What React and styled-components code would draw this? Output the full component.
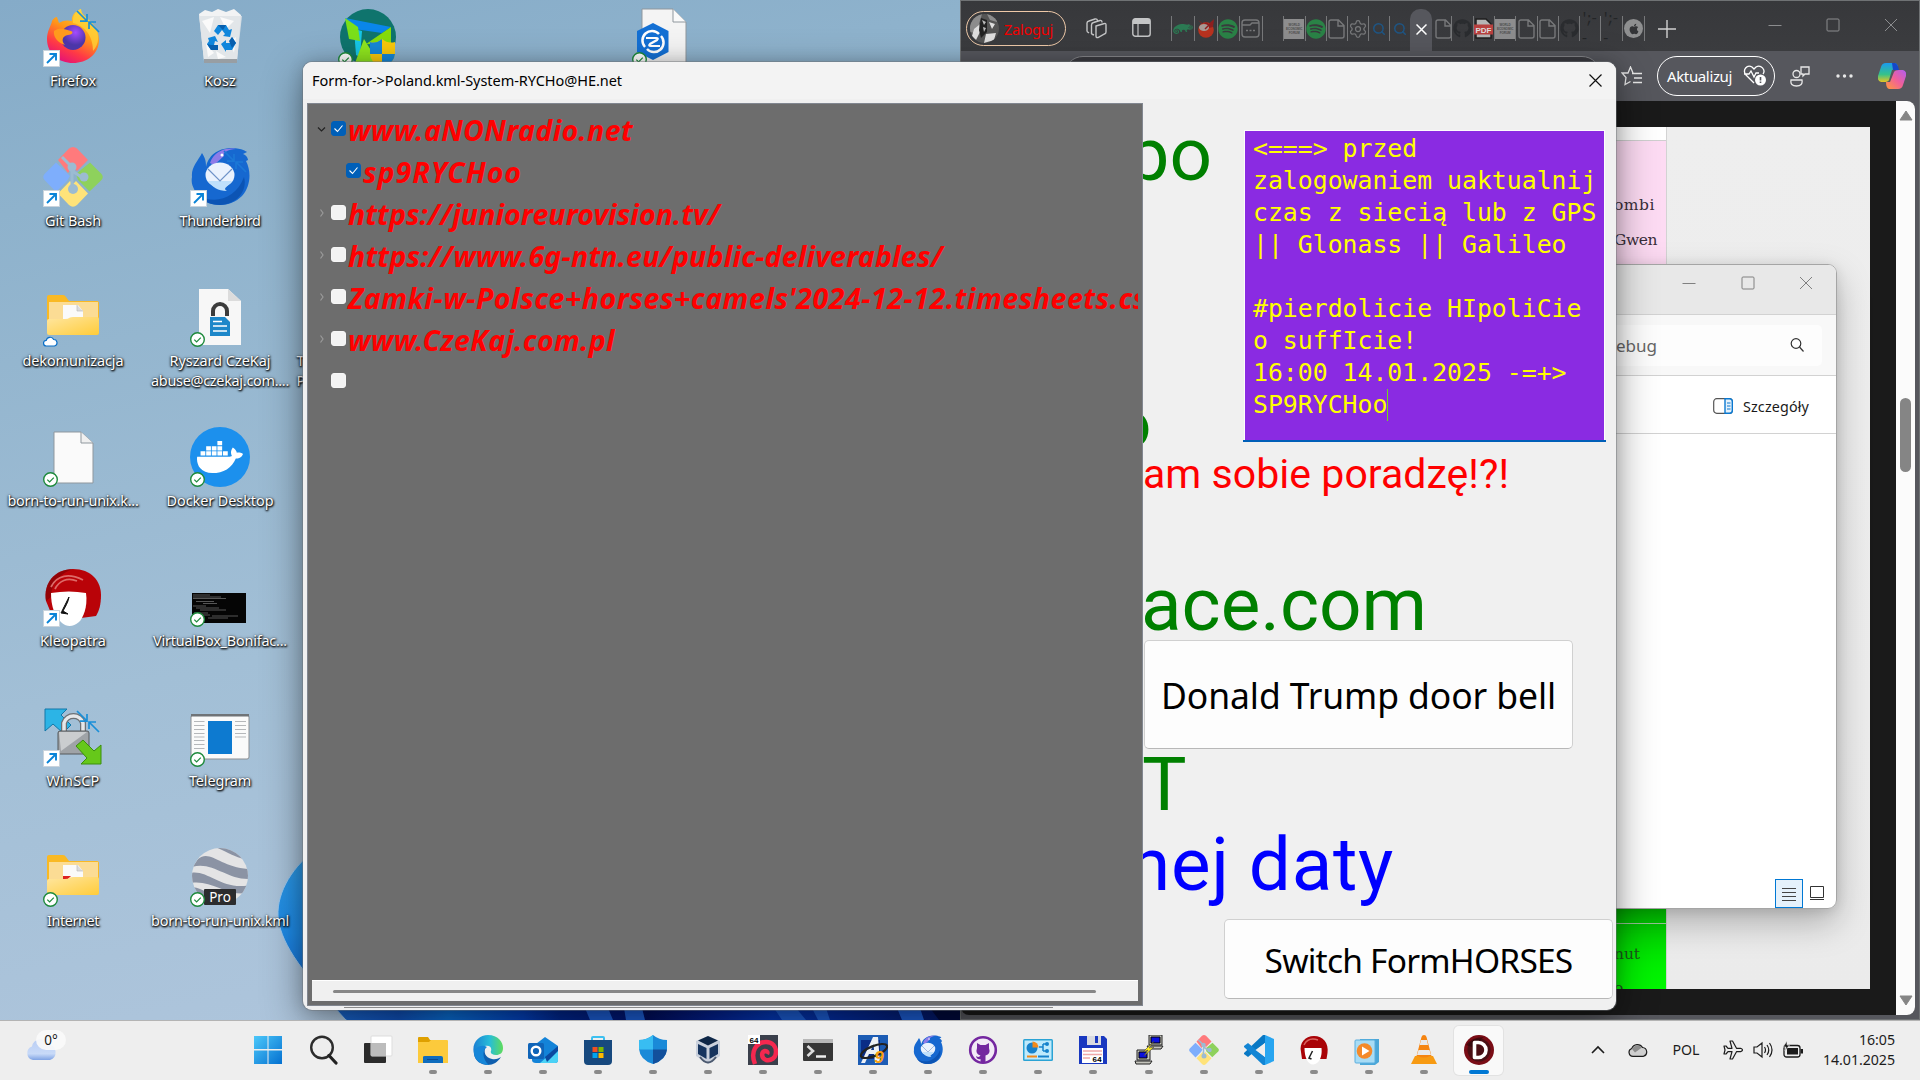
import React, { useLayoutEffect, useRef, useState } from "react";
import styled, { createGlobalStyle, css } from "styled-components";
import { FaSpotify, FaGithub, FaApple, FaSuse, FaDocker } from "react-icons/fa";
import { Settings, Search } from "lucide-react";

const UI = `"Noto Sans", "Open Sans", sans-serif`;

const Global = createGlobalStyle`
  html, body { margin: 0; padding: 0; overflow: hidden; background: #9dbbd3; }
  * { box-sizing: border-box; }
  svg { display: block; flex: none; }
`;

/* ---------- text fitted to a given advance width ---------- */
const Fitted = styled.span`
  display: inline-block;
  white-space: pre;
`;
function Fit({ w, children }) {
  const ref = useRef(null);
  const [sp, setSp] = useState(0);
  useLayoutEffect(() => {
    const natural = ref.current.getBoundingClientRect().width;
    setSp((w - natural) / children.length);
  }, [w, children]);
  return (
    <Fitted ref={ref} style={{ letterSpacing: sp }}>
      {children}
    </Fitted>
  );
}

/* ---------- desktop ---------- */
const Screen = styled.div`
  position: relative;
  width: 1920px;
  height: 1080px;
  overflow: hidden;
  font-family: ${UI};
  display: flex;
  flex-direction: column;
`;
const Desktop = styled.main`
  position: relative;
  height: 1020px;
  overflow: hidden;
  background: linear-gradient(168deg, #85abc8 0%, #8eb2cc 15%, #a2bfd6 50%, #aec5dc 78%, #b0c8de 100%);
`;
const Wallpaper = styled.svg`
  position: absolute;
  inset: 0;
`;
const IconGrid = styled.div`
  position: absolute;
  left: -0.5px;
  top: 7px;
  display: flex;
`;
const IconColumn = styled.div`
  display: flex;
  flex-direction: column;
  width: 147px;
`;
const IconCell = styled.div`
  height: 140px;
  display: flex;
  flex-direction: column;
  align-items: ${(p) => (p.$left ? "flex-start" : "center")};
  padding-left: ${(p) => (p.$left ? "3px" : 0)};
`;
const IconArt = styled.div`
  position: relative;
  width: 60px;
  height: 60px;
  ${(p) => p.$left && "margin-left: 41px;"}
`;
const Badge = styled.div`
  position: absolute;
  left: 0;
  bottom: 0;
`;
const IconLabel = styled.div`
  margin-top: 4px;
  font-size: 14.4px;
  line-height: 20px;
  color: #fff;
  text-align: center;
  white-space: nowrap;
  text-shadow: 0 1px 2px #000, 1px 1px 2px rgba(0, 0, 0, 0.9), 0 0 3px rgba(0, 0, 0, 0.5);
  display: flex;
  flex-direction: column;
  align-items: center;
`;

const Shortcut = () => (
  <svg width="17" height="17" viewBox="0 0 17 17">
    <rect x=".5" y=".5" width="16" height="16" fill="#fff" stroke="#c9d3dc" />
    <path d="M4 13L13 4M6.5 4H13V10.5" fill="none" stroke="#0a84d8" strokeWidth="1.9" />
  </svg>
);
const Synced = () => (
  <svg width="15" height="15" viewBox="0 0 15 15">
    <circle cx="7.5" cy="7.5" r="6.8" fill="#fff" stroke="#1e8a3c" strokeWidth="1.4" />
    <path d="M4.3 7.7L6.6 10L10.8 5.6" fill="none" stroke="#1e8a3c" strokeWidth="1.2" />
  </svg>
);
const CloudBadge = () => (
  <svg width="15" height="15" viewBox="0 0 15 15">
    <path d="M3.5 14a2.8 2.8 0 0 1-.3-5.6A4 4 0 0 1 10.7 7.500A3.300 3.300 0 0 1 11.500 14Z" fill="#fff" stroke="#0a6fc8" strokeWidth="1.2" />
  </svg>
);
const Squeeze = ({ c = "#1a8fd8" }) => (
  <g fill="none" stroke={c} strokeWidth="1.7">
    <path d="M34 4L44 14M44 7V14.200H37M56 25L46 15M46 22V15H53" />
  </g>
);

const Svg60 = ({ children }) => (
  <svg width="60" height="60" viewBox="0 0 60 60">
    {children}
  </svg>
);

const FirefoxArt = () => (
  <Svg60>
    <defs>
      <linearGradient id="ffa" x1="0.8" y1="0" x2="0.3" y2="1">
        <stop offset="0" stopColor="#ffe03a" />
        <stop offset=".45" stopColor="#ff9518" />
        <stop offset=".75" stopColor="#ff3a45" />
        <stop offset="1" stopColor="#e3107a" />
      </linearGradient>
      <radialGradient id="ffb" cx=".6" cy=".3">
        <stop offset="0" stopColor="#a44bff" />
        <stop offset="1" stopColor="#4b36a8" />
      </radialGradient>
    </defs>
    <path d="M4 32C4 24 8 19 9 14C11 10 14 10 14 10L16 16C20 13 25 13 29 14C28 8 33 4 38 2C38 8 44 10 49 16C54 21 56 27 56 33C56 47 44 56 30 56S4 47 4 32Z" fill="url(#ffa)" />
    <path d="M38 2C38 8 44 10 49 16C58 26 56 38 50 44C50 32 45 20 30 16C29 9 33 4 38 2Z" fill="#ffd43a" opacity=".75" />
    <circle cx="30" cy="30.500" r="12.500" fill="url(#ffb)" />
    <path d="M11 24C16 20 22 22 28 24C31 25 29 28 25 28C19 29 18 34 22 38C15 36 10 30 11 24Z" fill="#ff9a1c" />
    <Squeeze />
  </Svg60>
);
const BinArt = () => (
  <Svg60>
    <path d="M9 7L15 3L22 5L28 2L36 5L44 2L51 8L47 54H14Z" fill="#f2f3f4" />
    <path d="M9 9H52L47 53H14Z" fill="#dfe3e6" opacity=".85" />
    <path d="M12 14L24 10L20 26ZM30 10L44 14L36 22ZM16 36L24 46L18 50ZM40 34L46 30L44 46ZM26 44L36 50L28 52Z" fill="#fafafa" />
    <path d="M14 52H47V56H14Z" fill="#989ea3" />
    <g fill="#0f86dc">
      <path d="M24 24L28 18H36L39 23L42 22L40 30L33 29L35 27L32 23L28 28Z" />
      <path d="M18 31L25 29L28 35L25 34L24 38L28 38V43H21L17 37L19 34Z" />
      <path d="M31 37L36 33V36L40 36L42 30L46 36L42 43H36V45Z" />
    </g>
    <path d="M28 18H36L33 23ZM17 37L21 43L28 43V38L21 38ZM42 30L46 36L42 41L39 34Z" fill="#075fae" />
  </Svg60>
);
const GitShape = () => (
  <g>
    <path d="M26 1.500Q30 -1.500 34 1.500L45 13L34 24L29 20L25 26L15 13Z" fill="#ff7a7c" />
    <path d="M13 15.500L27 29L24 34L13 45L1.500 33Q-1 30 1.500 27Z" fill="#7eaefc" />
    <path d="M47 15.500L58.500 27Q61 30 58.500 33L46.500 44.500L35 33L33 27Z" fill="#8ed15c" />
    <path d="M15 46.500L27 34L30 37L33 34L45 46.500L34 58Q30 61.500 26 58Z" fill="#ffe37a" />
    <path d="M19 10L29 20V40M29 24L40 31" stroke="#9cbbd2" strokeWidth="3" fill="none" />
    <circle cx="29" cy="20" r="4.500" fill="#9cbbd2" />
    <circle cx="41" cy="30" r="4.500" fill="#9cbbd2" />
    <circle cx="30" cy="42" r="5" fill="#9cbbd2" />
  </g>
);
const TbirdShape = () => (
  <g>
    <path d="M2 30C1 20 8 14 12 6C16 12 16 16 16 20C18 10 26 1 42 1C52 1 57 5 57 5L53 7C58 9 58 13 58 13L56 14C62 26 60 40 52 49C40 61 20 61 9 49C2 41 1 35 2 30Z" fill="#1668d0" />
    <path d="M20 16C24 4 36 0 46 2C38 2 32 6 34 9L24 18Z" fill="#8d7be8" />
    <path d="M8 48C24 58 46 52 54 30C58 44 46 58 30 58C20 58 12 54 8 48Z" fill="#0c54b4" />
    <ellipse cx="30" cy="28" rx="14.500" ry="12.500" fill="#eaf2fd" />
    <path d="M18 34C22 40 28 44 37 44C32 41 38 40 42 34Z" fill="#bfe0fb" />
    <path d="M18 22L30 34L42 22" fill="none" stroke="#6f93c8" strokeWidth="1.200" />
    <circle cx="32" cy="8" r="1.500" fill="#fff" />
  </g>
);
const FolderArt = ({ red }) => (
  <Svg60>
    <defs>
      <linearGradient id="fold" x1="0" y1="0" x2="1" y2="1">
        <stop offset="0" stopColor="#ffe6a0" />
        <stop offset="1" stopColor="#ffcc3a" />
      </linearGradient>
    </defs>
    <path d="M4 10Q4 8 6 8H20Q22 8 23 10L26 14H54Q56 14 56 16V44H4Z" fill="#f9b924" />
    <rect x="6" y="15" width="49" height="24" fill="#fbdc94" />
    <path d="M20 18H35L40 24V34H20Z" fill="#fafafa" />
    <path d="M34 18V24H40" fill="#ddd" stroke="#bbb" strokeWidth=".7" />
    {red && <path d="M20 29H28L24 33H20Z" fill="#d22" />}
    <path d="M4 34Q4 32 6 32H22Q25 32 27 30.500Q28 30 30 30H54Q56 30 56 32V46Q56 48 54 48H6Q4 48 4 46Z" fill="url(#fold)" />
  </Svg60>
);
const LockFileArt = () => (
  <Svg60>
    <path d="M9 2H38L51 14V58H9Z" fill="#f7f7f7" />
    <path d="M38 2V14H51Z" fill="#dcdcdc" />
    <path d="M23 29V24A7 7 0 0 1 37 24V29" fill="none" stroke="#3c3c3c" strokeWidth="4" />
    <path d="M20 30H35L40 35V49H20Z" fill="#1d87c9" />
    <path d="M23 34.500H32M23 39H37M23 44H37" stroke="#fff" strokeWidth="1.700" />
  </Svg60>
);
const FileArt = () => (
  <Svg60>
    <path d="M11 5H38L50 16V56H11Z" fill="#fafafa" stroke="#8f979d" />
    <path d="M38 5V16H50" fill="#f0f0f0" stroke="#8f979d" />
  </Svg60>
);
const Dock = styled.div`
  width: 60px;
  height: 60px;
  border-radius: 50%;
  background: #1c90ed;
  display: flex;
  align-items: center;
  justify-content: center;
  color: #fff;
`;
const KleoShape = () => (
  <g>
    <path d="M3 34C0 16 12 2 30 2C48 2 58 14 58 28C58 38 56 44 53 49L38 51L8 46Z" fill="#b90308" />
    <path d="M3 34C0 16 12 2 30 2C18 6 8 16 8 30Z" fill="#7a0205" opacity=".6" />
    <path d="M8 26Q26 23 43 26C45 40 40 51 36 55C30 60 24 60 19 56C12 50 8 40 8 26Z" fill="#fff" />
    <path d="M8 20C14 8 26 6 40 13M12 22C16 14 24 10 34 14" stroke="#dd6a68" strokeWidth="1.800" fill="none" />
    <path d="M26 30C22 38 20 42 18 46L25 47L20 44C22 40 25 36 26 30Z" fill="#111" stroke="#111" />
  </g>
);
const TermArt = () => (
  <Svg60>
    <rect x="2" y="26" width="54" height="30" fill="#050505" />
    <g stroke="#6a6a6a" strokeWidth=".8">
      <path d="M3 28H20M3 30H31M3 31.500H36M6 34.500H24M13 36.500H27M3 39H16M6 41H29M10 43H36M4 46H18M8 48H20M22 49H48M18 51H38" />
    </g>
  </Svg60>
);
const WinscpArt = () => (
  <Svg60>
    <path d="M2 2H24L18 8L28 18L20 26L10 17L2 24Z" fill="#2cb4e6" stroke="#1377a8" />
    <path d="M21 28V16A10 10 0 0 1 40 16V28" fill="none" stroke="#6d7073" strokeWidth="6" />
    <path d="M21 28V16A10 10 0 0 1 40 16V28" fill="none" stroke="#e6e8ea" strokeWidth="3.500" />
    <rect x="15" y="24" width="31" height="23" rx="2" fill="#9fa3a7" stroke="#55585b" />
    <path d="M16 25H44L18 44Z" fill="#d5d7da" opacity=".8" />
    <path d="M33 39L40 33L51 44L58 38V57H38L44 51Z" fill="#66c81a" stroke="#3a8f0c" />
    <Squeeze />
  </Svg60>
);
const TelegramArt = () => (
  <Svg60>
    <rect x="1" y="8" width="58" height="44" rx="2" fill="#fafafa" stroke="#8c8f93" />
    <rect x="1" y="7" width="58" height="2.500" fill="#6f7377" />
    <rect x="18" y="14" width="24" height="33" fill="#0d7ad0" />
    <path d="M4 14.500H14.500M4 18.500H14.500M4 22.500H14.500M4 26.500H14.500M4 30H14.500M4 33.500H14.500M4 37.500H14.500M4 41.500H14.500M45 14.500H56M45 18.500H56M45 22.500H56M45 26.500H56M45 30H56" stroke="#b5b7ba" strokeWidth="1" />
  </Svg60>
);
const EarthArt = () => (
  <Svg60>
    <defs>
      <clipPath id="earth">
        <circle cx="30" cy="29" r="28" />
      </clipPath>
    </defs>
    <g clipPath="url(#earth)">
      <rect width="60" height="60" fill="#e4e4e5" />
      <path d="M8 12C20 2 30 20 58 22V32C36 32 22 14 2 20ZM0 26C18 22 32 44 60 38V46C36 50 22 32 0 36ZM20 -2C36 4 44 10 54 12L44 0ZM0 40C14 40 24 52 40 58L10 60Z" fill="#8b93a4" />
    </g>
    <rect x="14" y="42" width="32" height="16" rx="1" fill="#2b2c2e" />
    <text x="30" y="55" fontSize="13.500" fill="#fff" textAnchor="middle" fontFamily="Noto Sans, sans-serif">Pro</text>
  </Svg60>
);
const PrismArt = () => (
  <Svg60>
    <circle cx="30" cy="30" r="28" fill="#0f746d" />
    <path d="M7 11L53 20L44 26L16 22Z" fill="#0a86ea" />
    <path d="M16 22L24 24L22 50L18 48Z" fill="#16c6e8" />
    <path d="M7 11L20 20L22 34L11 32Z" fill="#7be01a" />
    <path d="M53 20V38L28 37Z" fill="#86dc0a" />
    <path d="M26 32L42 58L17 56Z" fill="#8fe61e" />
    <path d="M44 32Q50 37 57 35V47Q56 56 44 62Q33 56 32 47V35Q38 37 44 32Z" fill="#f9c80c" />
    <path d="M44 32Q38 37 32 35V47H44ZM44 47H57Q56 56 44 62Z" fill="#1787d8" />
  </Svg60>
);
const HexFileArt = () => (
  <Svg60>
    <path d="M10 2H41L54 15V60H10Z" fill="#f4f4f4" stroke="#8f979d" />
    <path d="M41 2V15H54" fill="#fafafa" stroke="#8f979d" />
    <path d="M21 16L36.500 24V45L21 53L5 45V24Z" fill="#1470d4" />
    <path d="M13 40A9.500 9.500 0 0 1 27 27M29 29A9.500 9.500 0 0 1 15 42" fill="none" stroke="#fff" strokeWidth="2.500" />
    <path d="M14 31H24Q27 31 25 33L18 37Q16 39 19 39H28" fill="none" stroke="#fff" strokeWidth="2.200" />
  </Svg60>
);

const COLUMNS = [
  [
    { art: <FirefoxArt />, badge: <Shortcut />, label: [["Firefox", 46]] },
    { art: <Svg60><GitShape /></Svg60>, badge: <Shortcut />, label: [["Git Bash", 56]] },
    { art: <FolderArt />, badge: <CloudBadge />, label: [["dekomunizacja", 101]] },
    { art: <FileArt />, badge: <Synced />, label: [["born-to-run-unix.k...", 131]] },
    { art: <Svg60><KleoShape /></Svg60>, badge: <Shortcut />, label: [["Kleopatra", 66]] },
    { art: <WinscpArt />, badge: <Shortcut />, label: [["WinSCP", 53]] },
    { art: <FolderArt red />, badge: <Synced />, label: [["Internet", 52]] },
  ],
  [
    { art: <BinArt />, label: [["Kosz", 32]] },
    { art: <Svg60><TbirdShape /><Squeeze c="#1b78d6" /></Svg60>, badge: <Shortcut />, label: [["Thunderbird", 81]] },
    { art: <LockFileArt />, badge: <Synced />, label: [["Ryszard CzeKaj", 101], ["abuse@czekaj.com....", 138]] },
    { art: <Dock><FaDocker size={46} /></Dock>, badge: <Synced />, label: [["Docker Desktop", 107]] },
    { art: <TermArt />, badge: <Synced />, label: [["VirtualBox_Bonifac...", 134]] },
    { art: <TelegramArt />, badge: <Synced />, label: [["Telegram", 62]] },
    { art: <EarthArt />, badge: <Synced />, label: [["born-to-run-unix.kml", 138]] },
  ],
  [
    { art: <PrismArt />, badge: <Synced />, left: true, label: [] },
    { left: true, label: [] },
    { left: true, label: [["T", 9], ["P", 9]] },
  ],
  [],
  [{ art: <HexFileArt />, badge: <Synced />, left: true, label: [] }],
];

function DesktopIcons() {
  return (
    <IconGrid>
      {COLUMNS.map((col, i) => (
        <IconColumn key={i}>
          {col.map((c, j) => (
            <IconCell key={j} $left={c.left}>
              <IconArt $left={c.left}>
                {c.art}
                {c.badge && <Badge>{c.badge}</Badge>}
              </IconArt>
              <IconLabel>
                {c.label.map(([t, w]) => (
                  <Fit key={t} w={w}>{t}</Fit>
                ))}
              </IconLabel>
            </IconCell>
          ))}
        </IconColumn>
      ))}
    </IconGrid>
  );
}

/* ---------- browser ---------- */
const Browser = styled.section`
  position: absolute;
  left: 960px;
  top: 0;
  width: 960px;
  height: 1020px;
  border: 1px solid #6f7274;
  background: #56575d;
  display: flex;
  flex-direction: column;
`;
const TabStrip = styled.div`
  height: 50px;
  background: linear-gradient(#37383b, #3b3c3f);
  display: flex;
  align-items: center;
  padding: 5px 0 0 5px;
`;
const Profile = styled.div`
  width: 100px;
  height: 35px;
  border: 1.500px solid #eec9a8;
  border-radius: 18px;
  display: flex;
  align-items: center;
  gap: 5px;
  padding-left: 3px;
  margin-right: 20px;
  color: #f40000;
  font-size: 14.500px;
`;
const TabTools = styled.div`
  display: flex;
  gap: 25px;
  color: #c4c5c6;
  width: 85px;
`;
const Tab = styled.div`
  width: ${(p) => p.$w || 21.3}px;
  height: 25px;
  border-right: 1px solid #77787a;
  border-left: ${(p) => (p.$first ? "1px solid #77787a" : "0")};
  margin-left: ${(p) => p.$gap || 0}px;
  display: flex;
  align-items: center;
  justify-content: center;
  color: ${(p) => p.$c || "#77787a"};
`;
const TabText = styled.span`
  font: 14px/20px "Liberation Mono", monospace;
  letter-spacing: -3.500px;
  padding-right: 3px;
`;
const ActiveTab = styled.div`
  width: 22px;
  height: 42px;
  margin: 0 3px 0 0;
  align-self: flex-end;
  border-radius: 10px 10px 0 0;
  background: #56575d;
  display: flex;
  align-items: center;
  justify-content: center;
  padding-bottom: 2px;
`;
const Wef = styled.div`
  width: 20px;
  height: 20px;
  flex: none;
  background: #8d8d8e;
  color: #4c4c4c;
  display: flex;
  flex-direction: column;
  align-items: center;
  justify-content: center;
  font: bold 3px/4px "Liberation Sans", sans-serif;
`;
const AppleDot = styled.div`
  width: 19px;
  height: 19px;
  border-radius: 50%;
  background: #8e8f90;
  color: #333437;
  display: flex;
  align-items: center;
  justify-content: center;
`;
const NewTab = styled.svg`
  margin-left: 13px;
`;
const PinnedSearch = styled.div`
  width: 20px;
  display: flex;
  justify-content: center;
  color: #1f5583;
`;
const Caption = styled.div`
  display: flex;
  margin-left: auto;
  gap: 44px;
  padding: 0 21px 8px 0;
`;
const Toolbar = styled.div`
  height: 50px;
  background: #56575d;
  display: flex;
  align-items: center;
`;
const Address = styled.div`
  align-self: flex-start;
  margin: 5px 0 0 103px;
  width: 537px;
  height: 38px;
  border: 1px solid #85868a;
  border-radius: 19px;
  background: #3b3b41;
  margin-right: 20px;
`;
const Update = styled.div`
  width: 118px;
  height: 40px;
  margin: 0 15px;
  border: 1.500px solid #fff;
  border-radius: 20px;
  display: flex;
  align-items: center;
  justify-content: space-between;
  padding: 0 8px 1px 9px;
  color: #fff;
  font-size: 15px;
`;
const ToolIcons = styled.div`
  display: flex;
  align-items: center;
  gap: 25.500px;
`;
const Viewport = styled.div`
  height: 914px;
  margin-right: 4px;
  display: flex;
  background: #1a1a1a;
  border-radius: 0 8px 8px 8px;
  overflow: hidden;
`;
const Page = styled.div`
  margin: 26px 26px 26px auto;
  width: 300px;
  height: 862px;
  background: linear-gradient(#eee, #ebebeb);
`;
const PageColumn = styled.div`
  width: 97px;
  height: 100%;
  background: #fff;
  border-right: 1px solid #d3d3d3;
  display: flex;
  flex-direction: column;
  overflow: hidden;
  color: #3a2f3a;
  font: 15.500px/35px "DejaVu Serif", serif;
`;
const PinkCell = styled.div`
  flex: none;
  margin-top: 13px;
  height: 640px;
  border-top: 1px solid #cfcfcf;
  background: #fddbf3;
  padding: 47px 0 0 44px;
  display: flex;
  flex-direction: column;
  align-items: flex-start;
`;
const GreenCell = styled.div`
  flex: none;
  height: 230px;
  background: linear-gradient(#00c800 55%, #00f000 82%, #00ff00);
  padding: 143px 0 0 44px;
  line-height: 34px;
  color: #1d5a1d;
  display: flex;
  flex-direction: column;
  align-items: flex-start;
`;
const GreenLine = styled.div`
  flex: none;
  height: 1px;
  width: 97px;
  margin: 0 0 13px -44px;
  background: #a8d8a8;
`;
const ScrollTrack = styled.div`
  width: 19px;
  background: #fbfbfb;
  display: flex;
  flex-direction: column;
  align-items: center;
  padding: 9px 0;
`;
const ScrollThumb = styled.div`
  width: 11px;
  height: 74px;
  border-radius: 6px;
  margin: 277px 0 auto;
  background: #858585;
`;

const DocIcon = () => (
  <svg width="17" height="20" viewBox="0 0 17 20" fill="none" stroke="currentColor" strokeWidth="1.400">
    <path d="M3 1H10.500L16 6.500V17Q16 19 14 19H3Q1 19 1 17V3Q1 1 3 1ZM10 1V7H16" />
  </svg>
);
const PdfIcon = () => (
  <svg width="19" height="21" viewBox="0 0 19 21">
    <path d="M2 1H12L17 6V20H2Z" fill="#b5b5b5" stroke="#1f1f1f" strokeWidth="1.500" />
    <rect x="0" y="6.500" width="19" height="10" fill="#b8403f" />
    <text x="9.500" y="14.500" fontSize="8" fontWeight="bold" fill="#ddd" textAnchor="middle" fontFamily="Liberation Sans, sans-serif">PDF</text>
  </svg>
);
const WefIcon = () => (
  <Wef>
    <span>WORLD</span>
    <span>ECONOMIC</span>
    <span>FORUM</span>
  </Wef>
);
const WindowButtons = ({ c, max = 12 }) => (
  <>
    <svg width="14" height="14" viewBox="0 0 14 14" stroke={c} fill="none"><path d="M.5 7.500H13.500" /></svg>
    <svg width="14" height="14" viewBox="0 0 14 14" stroke={c} fill="none"><rect x="1" y="1" width={max} height={max} rx="1" /></svg>
    <svg width="14" height="14" viewBox="0 0 14 14" stroke={c} fill="none"><path d="M1 1L13 13M13 1L1 13" /></svg>
  </>
);

function BrowserWindow() {
  return (
    <Browser>
      <TabStrip>
        <Profile>
          <svg width="29" height="29" viewBox="0 0 29 29">
            <defs><clipPath id="av"><circle cx="14.500" cy="14.500" r="14.500" /></clipPath></defs>
            <g clipPath="url(#av)">
              <rect width="29" height="29" fill="#555" />
              <path d="M0 4L12 0L9 10L14 14L8 20L0 18ZM17 0H27V8L20 6Z" fill="#8c8c8c" />
              <path d="M4 15L9 11L10 18L6 26L2 22ZM16 20L26 19L24 26L14 29ZM19 8L25 10L22 15Z" fill="#dedede" />
              <path d="M11 4L17 6L17 18L11 24L9 16Z" fill="#222" />
              <path d="M12 6L16 8L14 11ZM13 13L16 14L14 18Z" fill="#bbb" />
            </g>
          </svg>
          <Fit w={49}>Zaloguj</Fit>
        </Profile>
        <TabTools>
          <svg width="21" height="21" viewBox="0 0 21 21" fill="none" stroke="currentColor" strokeWidth="1.400">
            <path d="M10 8L18.500 5.500Q20 5 20 7V14Q20 15.500 18.500 16L12 19.500Q10 20 10 18ZM5.500 16V7Q5.500 5 7.500 4.500L14 2.500Q16 2 16 4.500M1 13.500V5Q1 3.500 3 3L9 1Q11 .5 11.500 2.500M5.500 16L8 17M1 13.500L3 15" />
          </svg>
          <svg width="19" height="19" viewBox="0 0 19 19">
            <rect x=".8" y=".8" width="17.400" height="17.400" rx="2.500" fill="none" stroke="currentColor" strokeWidth="1.400" />
            <path d="M1 1H18V6H1Z" fill="currentColor" />
            <path d="M6 6V18" stroke="currentColor" strokeWidth="1.200" />
          </svg>
        </TabTools>
        <Tab $first $w={24} $c="#2b7a53"><FaSuse size={20} /></Tab>
        <Tab $w={22.5}>
          <svg width="18" height="19" viewBox="0 0 18 19">
            <circle cx="9" cy="11" r="7.800" fill="#b8321f" />
            <path d="M1 1L6 6L9 3L12 5L17 0L16 8L12 9Z" fill="#8d1f1f" />
            <ellipse cx="7" cy="8.500" rx="5" ry="3.500" fill="#a79a95" />
            <path d="M8 10L16 2" stroke="#8d1f1f" strokeWidth="1.500" />
          </svg>
        </Tab>
        <Tab $w={22.5} $c="#2a8246"><FaSpotify size={20} /></Tab>
        <Tab $w={22.5}>
          <svg width="19" height="19" viewBox="0 0 19 19" fill="none" stroke="currentColor" strokeWidth="1.400">
            <rect x="1" y="1" width="17" height="17" rx="3" />
            <path d="M1 6H9L11 4H18M5 11.500H7M8.500 11.500H10.500M12 11.500H14" />
          </svg>
        </Tab>
        <Tab $gap={20.5} $first $w={22.5}><WefIcon /></Tab>
        <Tab $w={21} $c="#2a8246"><FaSpotify size={20} /></Tab>
        <Tab><DocIcon /></Tab>
        <Tab><Settings size={20} strokeWidth={1.5} /></Tab>
        <Tab $c="#1f5583"><Search size={14} strokeWidth={2.6} /></Tab>
        <PinnedSearch><Search size={14} strokeWidth={2.6} /></PinnedSearch>
        <ActiveTab>
          <svg width="11" height="11" viewBox="0 0 11 11" stroke="#fff" strokeWidth="1.500"><path d="M.5 .5L10.500 10.500M10.500 .5L.5 10.500" /></svg>
        </ActiveTab>
        <Tab $w={17}><DocIcon /></Tab>
        <Tab $c="#2a2c2f"><FaGithub size={19} /></Tab>
        <Tab><PdfIcon /></Tab>
        <Tab><WefIcon /></Tab>
        <Tab><DocIcon /></Tab>
        <Tab><DocIcon /></Tab>
        <Tab $c="#2a2c2f"><FaGithub size={19} /></Tab>
        <Tab $c="#232527"><TabText>';--</TabText></Tab>
        <Tab $c="#232527"><TabText>';--</TabText></Tab>
        <Tab $w={22.5}><AppleDot><FaApple size={12} /></AppleDot></Tab>
        <NewTab width="18" height="18" viewBox="0 0 18 18"><path d="M9 0V18M0 9H18" stroke="#d0d0d0" strokeWidth="1.400" /></NewTab>
        <Caption><WindowButtons c="#8c8d8f" /></Caption>
      </TabStrip>
      <Toolbar>
        <Address />
        <svg width="21" height="20" viewBox="0 0 21 20" fill="none" stroke="#e8e8e8" strokeWidth="1.300">
          <path d="M12 7L9.500 1L7 7H1L5 11.500L4 18.500L9.500 15.500M11 7.500H21M13 12H21M12 16.500H21" />
        </svg>
        <Update>
          <Fit w={65}>Aktualizuj</Fit>
          <svg width="23" height="21" viewBox="0 0 23 21" fill="none" stroke="#fff" strokeWidth="1.300">
            <path d="M11 18L3 10C-1 5 4 -1 9 2L11 4L13 2C18 -1 23 5 20 9M1 9H6L8 6L11 12L13 8H16" />
            <circle cx="17.500" cy="15" r="5.500" fill="#fff" stroke="none" />
            <path d="M17.500 12V15.500M17.500 16.500V18" stroke="#55565c" strokeWidth="1.600" />
          </svg>
        </Update>
        <ToolIcons>
          <svg width="20" height="21" viewBox="0 0 20 21" fill="none" stroke="#e8e8e8" strokeWidth="1.300">
            <circle cx="6.500" cy="8" r="3.500" />
            <path d="M1 14H12Q13 20 6.500 20Q0 20 1 14ZM11 1H19V8H15L13 10V8H11Z" />
          </svg>
          <svg width="17" height="4" viewBox="0 0 17 4" fill="#e8e8e8"><circle cx="2" cy="2" r="1.700" /><circle cx="8.500" cy="2" r="1.700" /><circle cx="15" cy="2" r="1.700" /></svg>
          <svg width="28" height="26" viewBox="0 0 28 26">
            <defs>
              <linearGradient id="cpa" x1="0" y1="0" x2="0" y2="1"><stop offset="0" stopColor="#1a9bf0" /><stop offset=".6" stopColor="#35c28a" /><stop offset="1" stopColor="#e8c522" /></linearGradient>
              <linearGradient id="cpb" x1="1" y1="0" x2="0" y2="1"><stop offset="0" stopColor="#b05df0" /><stop offset=".5" stopColor="#f0609a" /><stop offset="1" stopColor="#ff9a3a" /></linearGradient>
            </defs>
            <path d="M8 0H17Q20 1 20 5L14 7L11 17Q10 19 6 19H3Q-1 18 0 13L3 4Q4 0 8 0Z" fill="url(#cpa)" />
            <path d="M14 0H17Q20 1 21 7H15Z" fill="#1547c8" />
            <path d="M20 26H11Q8 25 8 19H12L16 9Q17 7 21 7H25Q29 8 28 13L25 22Q24 26 20 26Z" fill="url(#cpb)" />
          </svg>
        </ToolIcons>
      </Toolbar>
      <Viewport>
        <Page>
          <PageColumn>
            <PinkCell>
              <Fit w={41}>ombi</Fit>
              <Fit w={43}>Gwen</Fit>
            </PinkCell>
            <GreenCell>
              <GreenLine />
              <Fit w={26}>nut</Fit>
              <Fit w={9}>o</Fit>
            </GreenCell>
          </PageColumn>
        </Page>
        <ScrollTrack>
          <svg width="14" height="11" viewBox="0 0 14 11"><path d="M7 1L13 10H1Z" fill="#858585" stroke="#858585" strokeLinejoin="round" /></svg>
          <ScrollThumb />
          <svg width="14" height="11" viewBox="0 0 14 11"><path d="M7 10L13 1H1Z" fill="#858585" stroke="#858585" strokeLinejoin="round" /></svg>
        </ScrollTrack>
      </Viewport>
    </Browser>
  );
}

/* ---------- explorer window ---------- */
const Explorer = styled.section`
  position: absolute;
  left: 1400px;
  top: 264px;
  width: 437px;
  height: 645px;
  border: 1px solid #a5a5a5;
  border-radius: 9px;
  background: #fff;
  overflow: hidden;
  display: flex;
  flex-direction: column;
`;
const ExplorerShadow = styled.div`
  position: absolute;
  left: 1400px;
  top: 264px;
  width: 437px;
  height: 645px;
  border-radius: 9px;
  box-shadow: 0 14px 34px rgba(0, 0, 0, 0.26), 0 2px 12px rgba(0, 0, 0, 0.1);
`;
const ExplorerTitle = styled.div`
  height: 50px;
  background: #e8e8e8;
  border-bottom: 1px solid #d2d2d2;
  display: flex;
  justify-content: flex-end;
  gap: 44.500px;
  padding: 11px 23px 0 0;
`;
const ExplorerBar = styled.div`
  height: 61px;
  background: #f8f8f8;
  border-bottom: 1px solid #d2d2d2;
  display: flex;
  align-items: center;
  justify-content: flex-end;
  padding-right: 14px;
`;
const SearchBox = styled.div`
  width: 222px;
  height: 41px;
  border-radius: 5px;
  background: #fdfdfd;
  display: flex;
  align-items: center;
  justify-content: space-between;
  padding: 0 18px 0 16px;
  color: #666;
  font-size: 17px;
`;
const ExplorerCommands = styled.div`
  height: 58px;
  border-bottom: 1px solid #d2d2d2;
  display: flex;
  align-items: center;
  justify-content: flex-end;
  gap: 10px;
  padding: 3px 27px 0 0;
  font-size: 14.300px;
  color: #1a1a1a;
`;
const ExplorerStatus = styled.div`
  margin-top: auto;
  display: flex;
  align-items: center;
  justify-content: flex-end;
  gap: 7px;
  padding-right: 12px;
`;
const ViewButton = styled.div`
  width: 28px;
  height: 29px;
  border: 1px solid #0078d4;
  background: #e5f1fb;
  display: flex;
  align-items: center;
  justify-content: center;
`;
function ExplorerWindow() {
  return (
    <>
      <ExplorerShadow />
      <Explorer>
        <ExplorerTitle><WindowButtons c="#808080" /></ExplorerTitle>
        <ExplorerBar>
          <SearchBox>
            <Fit w={41}>ebug</Fit>
            <svg width="14" height="14" viewBox="0 0 14 14" fill="none" stroke="#333" strokeWidth="1.200"><circle cx="6" cy="5.500" r="4.800" /><path d="M9.500 9L13.500 13.500" /></svg>
          </SearchBox>
        </ExplorerBar>
        <ExplorerCommands>
          <svg width="20" height="16" viewBox="0 0 20 16" fill="none" strokeWidth="1.200">
            <rect x=".7" y=".7" width="18.600" height="14.600" rx="3" stroke="#555" />
            <path d="M12 .7H16.500Q19.300 .7 19.300 3.500V12.500Q19.300 15.300 16.500 15.300H12Z" fill="#e4f1fb" stroke="#0a78d0" strokeWidth="1.400" />
            <path d="M14 5H17.500M14 8H17.500M14 11H17.500" stroke="#0a78d0" />
          </svg>
          <Fit w={66}>Szczegóły</Fit>
        </ExplorerCommands>
        <ExplorerStatus>
          <ViewButton>
            <svg width="14" height="14" viewBox="0 0 14 14" stroke="#444"><path d="M0 1.500H14M0 5.500H14M0 9.500H14M0 13.500H14" /></svg>
          </ViewButton>
          <svg width="14" height="15" viewBox="0 0 14 15" stroke="#333" fill="none"><path d="M.5 .5H13.500V11.500H.5ZM0 13.500H14" /></svg>
        </ExplorerStatus>
      </Explorer>
    </>
  );
}

/* ---------- form window ---------- */
const FormWindow = styled.section`
  position: absolute;
  left: 303px;
  top: 62px;
  width: 1313px;
  height: 948px;
  border-radius: 9px;
  background: #f0f0f0;
  box-shadow: 0 0 0 1px rgba(110, 115, 120, 0.45), 0 12px 40px rgba(0, 0, 0, 0.42), 0 0 16px rgba(0, 0, 0, 0.16);
  overflow: hidden;
  display: flex;
  flex-direction: column;
`;
const FormTitle = styled.header`
  height: 37px;
  flex: none;
  background: #f3f3f3;
  display: flex;
  align-items: center;
  justify-content: space-between;
  padding: 0 14px 1px 9px;
  font-size: 14.500px;
  color: #000;
`;
const FormBody = styled.div`
  flex: 1;
  display: flex;
`;
const LeftPane = styled.div`
  width: 836px;
  margin: 4px 0 0 4px;
  display: flex;
  flex-direction: column;
`;
const Tree = styled.div`
  height: 903px;
  border: 1px solid #828790;
  background: #6d6d6d;
  display: flex;
  flex-direction: column;
  padding: 4px;
`;
const TreeRows = styled.div`
  flex: 1;
  overflow: hidden;
`;
const TreeRow = styled.div`
  height: 42px;
  display: flex;
  align-items: center;
  padding-left: ${(p) => 4 + p.$level * 15}px;
  white-space: nowrap;
  color: #f00;
  font: italic bold 28.500px/42px ${UI};
`;
const RowText = styled.div`
  height: 42px;
  padding-top: 1px;
`;
const Expander = styled.svg`
  margin-right: 3px;
`;
const Box = styled.span`
  flex: none;
  width: 15px;
  height: 15px;
  border-radius: 3px;
  margin: 0 2px 1px 0;
  border: 1px solid ${(p) => (p.$on ? "#005fb8" : "#f6f6f6")};
  background: ${(p) => (p.$on ? "#005fb8" : "#f3f3f3")};
  display: flex;
  align-items: center;
  justify-content: center;
`;
const HScroll = styled.div`
  height: 21px;
  background: #f0f0f0;
  border-top: 1px solid #fff;
  display: flex;
  align-items: center;
  padding-left: 21px;
`;
const HThumb = styled.div`
  width: 763px;
  height: 3px;
  border-radius: 2px;
  background: #868686;
`;
const Splitter = styled.div`
  width: 709px;
  height: 1px;
  margin: 1px 0 0 37px;
  background: #8b8b8b;
`;
const RightPane = styled.div`
  flex: 1;
  overflow: hidden;
  display: flex;
  flex-direction: column;
`;
const TopRow = styled.div`
  display: flex;
  height: 351px;
`;
const TopLabels = styled.div`
  width: 101px;
  display: flex;
  flex-direction: column;
  align-items: flex-start;
`;
const Big = styled.div`
  flex: none;
  height: ${(p) => p.$lh || 70}px;
  margin: ${(p) => p.$mt || 0}px 0 0 ${(p) => p.$ml || 0}px;
  color: ${(p) => p.$c || "#008000"};
  font: ${(p) => p.$fs || 74.67}px/${(p) => p.$lh || 70}px Roboto, sans-serif;
  white-space: nowrap;
`;
const Memo = styled.div`
  width: 361px;
  height: 310px;
  margin-top: 31px;
  border: 1px solid #fdfdfd;
  border-bottom: 0;
  background: #8a2be2;
  color: #ff0;
  padding: 2px 0 0 8px;
  font: 24.800px/32px "DejaVu Sans Mono", monospace;
  white-space: pre;
`;
const MemoFrame = styled.div`
  display: flex;
  flex-direction: column;
  align-items: center;
`;
const MemoUnderline = styled.div`
  width: 363px;
  height: 2px;
  margin: 0 -1px;
  background: #005fb8;
`;
const MemoLine = styled.div`
  height: 32px;
  display: flex;
`;
const Caret = styled.span`
  width: 1px;
  height: 32px;
  background: #75d41d;
`;
const Button = styled.button`
  flex: none;
  width: ${(p) => p.$w}px;
  height: ${(p) => p.$h}px;
  margin: ${(p) => p.$mt || 0}px 0 0 ${(p) => p.$ml}px;
  padding: ${(p) => p.$pt || 0}px 0 0 0;
  border: 1px solid #d0d0d0;
  border-bottom-color: #b8b8b8;
  border-radius: 5px;
  background: #fdfdfd;
  color: #000;
  font: ${(p) => p.$fs}px ${UI};
`;

const Row = ({ level = 0, state, on, text, w }) => (
  <TreeRow $level={level}>
    <Expander width="12" height="12" viewBox="0 0 12 12" fill="none" stroke={state === "open" ? "#222" : "#9a9a9a"} strokeWidth="1.200">
      {state === "open" && <path d="M2 4.500L5.500 8L9 4.500" />}
      {state === "closed" && <path d="M4.500 2.500L7 6L4.500 9.500" />}
    </Expander>
    <Box $on={on}>
      {on && <svg width="11" height="11" viewBox="0 0 11 11" fill="none" stroke="#fff" strokeWidth="1.100"><path d="M1.500 5.500L4.500 8.500L9.500 2.500" /></svg>}
    </Box>
    {text && <RowText><Fit w={w}>{text}</Fit></RowText>}
  </TreeRow>
);

const MEMO = [
  "<===> przed",
  "zalogowaniem uaktualnij",
  "czas z siecią lub z GPS",
  "|| Glonass || Galileo",
  "",
  "#pierdolicie HIpoliCie",
  "o suffIcie!",
  "16:00 14.01.2025 -=+>",
];

function Form() {
  return (
    <FormWindow>
      <FormTitle>
        <Fit w={310}>{"Form-for->Poland.kml-System-RYCHo@HE.net"}</Fit>
        <svg width="13" height="13" viewBox="0 0 13 13" stroke="#111" strokeWidth="1.200"><path d="M.5 .5L12.500 12.500M12.500 .5L.5 12.500" /></svg>
      </FormTitle>
      <FormBody>
        <LeftPane>
          <Tree>
            <TreeRows>
              <Row state="open" on text="www.aNONradio.net" w={285} />
              <Row level={1} on text="sp9RYCHoo" w={159} />
              <Row state="closed" text="https://junioreurovision.tv/" w={372} />
              <Row state="closed" text="https://www.6g-ntn.eu/public-deliverables/" w={595} />
              <Row state="closed" text="Zamki-w-Polsce+horses+camels'2024-12-12.timesheets.csv" w={814} />
              <Row state="closed" text="www.CzeKaj.com.pl" w={267} />
              <Row />
            </TreeRows>
            <HScroll><HThumb /></HScroll>
          </Tree>
          <Splitter />
        </LeftPane>
        <RightPane>
          <TopRow>
            <TopLabels>
              <Big $mt={21} $ml={-15.5}>po</Big>
              <Big $mt={197} $ml={-33}>6</Big>
            </TopLabels>
            <MemoFrame>
              <Memo>
                {MEMO.map((l, i) => (
                  <MemoLine key={i}>{l}</MemoLine>
                ))}
                <MemoLine>SP9RYCHoo<Caret /></MemoLine>
              </Memo>
              <MemoUnderline />
            </MemoFrame>
          </TopRow>
          <Big $c="#f00" $fs={41} $lh={48}><Fit w={366}>am sobie poradzę!?!</Fit></Big>
          <Big $mt={72} $ml={-2}><Fit w={286}>ace.com</Fit></Big>
          <Button $w={429} $h={109} $ml={1} $fs={35.5}><Fit w={395}>Donald Trump door bell</Fit></Button>
          <Big $ml={-1} $mt={1}>T</Big>
          <Big $mt={10} $ml={-14} $c="#00f"><Fit w={265}>nej daty</Fit></Big>
          <Button $w={389} $h={80} $ml={81} $mt={19} $pt={1} $fs={33.5}><Fit w={308}>Switch FormHORSES</Fit></Button>
        </RightPane>
      </FormBody>
    </FormWindow>
  );
}

/* ---------- taskbar ---------- */
const Taskbar = styled.footer`
  height: 60px;
  background: #eee;
  border-top: 1px solid #b4b4b4;
  display: flex;
  align-items: center;
`;
const Weather = styled.div`
  width: 240px;
  padding-left: 25px;
  padding-bottom: 12px;
`;
const TaskIcons = styled.div`
  display: flex;
  align-items: center;
`;
const Task = styled.div`
  width: 49px;
  height: 49px;
  margin: 0 3.040px;
  border-radius: 5px;
  display: flex;
  flex-direction: column;
  align-items: center;
  justify-content: flex-end;
  padding-bottom: 1px;
  ${(p) => p.$active && css`background: #f9f9f9; box-shadow: 0 0 0 1px #e2e2e2;`}
`;
const Mark = styled.i`
  margin-top: 5px;
  width: ${(p) => (p.$active ? 20 : 8)}px;
  height: 4px;
  border-radius: 2px;
  background: ${(p) => (p.$active ? "#0078d4" : p.$none ? "transparent" : "#8a8a8a")};
`;
const Tray = styled.div`
  margin-left: auto;
  padding: 0 25px 2px 0;
  display: flex;
  align-items: center;
  color: #1c1c1c;
  font-size: 14.200px;
`;
const TrayItem = styled.div`
  margin-right: ${(p) => p.$gap}px;
`;
const Clock = styled.div`
  display: flex;
  flex-direction: column;
  align-items: flex-end;
  line-height: 20px;
`;

const S = ({ children, vb = "0 0 30 30" }) => (
  <svg width="30" height="30" viewBox={vb}>{children}</svg>
);
const TASKS = [
  { none: 1, art: <S><defs><linearGradient id="win" x1="0" y1="0" x2="1" y2="1"><stop offset="0" stopColor="#4cc8fa" /><stop offset="1" stopColor="#0470d0" /></linearGradient></defs><path d="M1 1H14.500V14H1ZM15.500 1H29V14H15.500ZM1 15.500H14.500V29H1ZM15.500 15.500H29V29H15.500Z" fill="url(#win)" /></S> },
  { none: 1, art: <S><circle cx="14" cy="12.500" r="10.800" fill="none" stroke="#2c2c2c" strokeWidth="2.400" /><path d="M21 20.500L28 28" stroke="#222" strokeWidth="3.200" strokeLinecap="round" /></S> },
  { none: 1, art: <S><rect x="1" y="8" width="22" height="20" rx="1" fill="#2b2b2b" /><rect x="8" y="1" width="21" height="20" rx="1" fill="#fff" stroke="#ddd" /><path d="M8 8H23V21H8Z" fill="#bcbcbc" /></S> },
  { art: <S><path d="M0 3Q0 2 1 2H10L12 5H29V10H0Z" fill="#dfa000" /><path d="M0 7H11L13 5H29Q30 5 30 6V28H0Z" fill="#fcca3c" /><path d="M5 28V22Q5 21 7 21H23Q25 21 25 23V28Z" fill="#0f6cbd" /><path d="M9 24.500H20" stroke="#0a4a90" /></S> },
  { art: <S><defs><linearGradient id="ed" x1="0" y1="0" x2="1" y2="0"><stop offset="0" stopColor="#1a7fd4" /><stop offset=".55" stopColor="#27bdd8" /><stop offset="1" stopColor="#5fdc5a" /></linearGradient></defs><path d="M15 0C25 0 30 7 30 13C30 18 27 20 23 20C19 20 17 18 18 16C19 13 17 10 12 11C8 11 2 14 1 19C-2 8 6 0 15 0Z" fill="url(#ed)" /><path d="M1 19C2 13 8 10 13 12C10 16 12 23 19 24C23 25 26 23 28 22C25 27 20 30 15 30C8 30 2 26 1 19Z" fill="#0f5fae" /><path d="M1 18C2 12 9 9 14 12C9 15 9 24 16 30C8 30 1 25 1 18Z" fill="#1686d8" /></S> },
  { art: <S><path d="M4 12L17 2L30 11V25Q30 28 27 28H8Q4 28 4 25Z" fill="#1383d8" /><path d="M30 11V25Q30 28 27 28H12L28 14Z" fill="#4ad2f6" /><path d="M17 22L30 11V16L19 27Z" fill="#0b4aa0" /><rect x="0" y="8" width="16" height="16" rx="1.500" fill="#0f64b8" /><circle cx="8" cy="16" r="4.300" fill="none" stroke="#fff" strokeWidth="2.400" /></S> },
  { art: <S><path d="M9 7V3Q9 2 10 2H20Q21 2 21 3V7" fill="none" stroke="#3cc0f0" strokeWidth="2" /><path d="M1 5H29V26Q29 30 25 30H5Q1 30 1 26Z" fill="#17497e" /><path d="M9.500 12H14.500V17H9.500Z" fill="#f25022" /><path d="M15.500 12H20.500V17H15.500Z" fill="#7fba00" /><path d="M9.500 18H14.500V23H9.500Z" fill="#00a4ef" /><path d="M15.500 18H20.500V23H15.500Z" fill="#ffb900" /></S> },
  { art: <S><path d="M15 0Q21 5 29 5V14Q28 25 15 29Q2 25 1 14V5Q9 5 15 0Z" fill="#1a8ad8" /><path d="M15 0Q9 5 1 5V14.500H15Z" fill="#38bdf2" /><path d="M15 14.500H29Q28 25 15 29Z" fill="#12509c" /></S> },
  { art: <S><path d="M15 1L27 6V21L15 29L3 21V6Z" fill="#c9d0dc" /><path d="M15 1L25 5.500L15 10.500L5 5.500Z" fill="#0f2747" /><path d="M5 9L13.500 13V24L5 19Z" fill="#16345e" /><path d="M25 9L16.500 13V24L25 19Z" fill="#16345e" /><path d="M7 22Q15 33 23 22" fill="none" stroke="#4c5a70" strokeWidth="2" /></S> },
  { art: <S><rect width="30" height="30" fill="#3a3f4b" /><path d="M7 29C2 17 8 7 18 7C25 7 28 12 28 17C28 23 23 26 18 25C13 23 13 17 17 16C19 16 20 17 19 19" fill="none" stroke="#f5284f" strokeWidth="4.500" /><rect width="12" height="9" fill="#fff" /><text x="6" y="7.500" fontSize="8" fontWeight="bold" textAnchor="middle" fontFamily="Liberation Sans, sans-serif">64</text></S> },
  { art: <S><rect y="4" width="30" height="22" rx="1" fill="#363636" /><path d="M0 4H30V8H0Z" fill="#b8b8b8" /><path d="M4.500 11L10 16L4.500 21" fill="none" stroke="#ddd" strokeWidth="2.600" /><path d="M13 21.500H23" stroke="#eee" strokeWidth="2.500" /></S> },
  { art: <S><rect width="30" height="30" fill="#1c5cb4" /><rect x="3" y="5" width="19" height="19" fill="#0a2d86" /><path d="M3 28L15 2H20L22 28H17L16 19H11L7 28Z" fill="#eef0f4" /><path d="M13 15L15.500 9L16 15Z" fill="#123a8c" /><ellipse cx="16" cy="16" rx="14" ry="5" transform="rotate(-22 16 16)" fill="none" stroke="#222" strokeWidth="2.200" /><text x="21" y="28" fontSize="17" fontWeight="bold" fontStyle="italic" fill="#f7a010" textAnchor="middle" fontFamily="Liberation Sans, sans-serif">9</text></S> },
  { art: <S vb="0 0 60 60"><TbirdShape /></S> },
  { art: <S><circle cx="15" cy="15" r="12.800" fill="#f2eaf6" stroke="#7427a0" strokeWidth="2.600" /><path d="M9 8L12.500 10H17.500L21 8V13Q23 19 17.500 20.500V27H12.500V24Q9 25 8 21Q11 23 12.500 20.500Q7 19 9 13Z" fill="#7427a0" /></S> },
  { art: <S><rect y="4" width="30" height="22" rx="1.500" fill="#2ba3d4" /><rect x="1.500" y="5.500" width="27" height="19" fill="#bfeafc" /><circle cx="9" cy="13" r="5.500" fill="#1682cc" /><path d="M9.500 12.500V6.500A6 6 0 0 1 15.500 12.500Z" fill="#f28a1a" /><path d="M16 12H20M20 9V16M20 9H24M20 16H24" stroke="#1682cc" strokeWidth="1.500" fill="none" /><circle cx="24" cy="9" r="2" fill="#1682cc" /><circle cx="24" cy="16" r="2" fill="#1682cc" /><path d="M4 21.500H14" stroke="#f28a1a" strokeWidth="2" /><path d="M15 21.500H26" stroke="#1682cc" strokeWidth="2" /></S> },
  { art: <S><path d="M1 1H26L29 4V29H1Z" fill="#1938c0" /><rect x="9" y="1" width="14" height="9" fill="#d8dae0" /><path d="M17 1H20V8H17Z" fill="#1938c0" /><rect x="4" y="13" width="21" height="15" fill="#fff" /><path d="M5 16H24M5 19.500H24M5 23H12" stroke="#f0a8a8" strokeWidth="1.600" /><text x="19" y="27" fontSize="8" fontWeight="bold" textAnchor="middle" fontFamily="Liberation Mono, monospace">64</text></S> },
  { art: <S><path d="M15 0H28V10H15ZM13 11H29L27 14H15Z" fill="#c4c4bc" stroke="#222" /><path d="M17 2H26V8H17Z" fill="#0a10e0" stroke="#000" /><path d="M3 15H16V25H3ZM1 26H18L16 29H2Z" fill="#c4c4bc" stroke="#222" /><path d="M5 17H13V23H5Z" fill="#0a10e0" stroke="#000" /><path d="M20 6L9 17L14 15L10 21L20 12L15 13Z" fill="#ffee20" stroke="#444" strokeWidth=".6" /></S> },
  { art: <S vb="0 0 60 60"><GitShape /></S> },
  { art: <S><path d="M21 0L30 4V26L21 30Z" fill="#28a5f0" /><path d="M21 0V8L4 22L0 19V18L19 0Z" fill="#0878c4" /><path d="M21 30V22L4 8L0 11V12L19 30Z" fill="#1285d4" /><path d="M21 8V22L11.500 15Z" fill="#eee" /></S> },
  { art: <S vb="0 0 60 60"><path d="M4 34C0 16 12 2 30 2C48 2 60 16 57 36L55 48H6Z" fill="#a90307" /><path d="M11 26H45C47 44 40 58 28 59C18 59 11 46 11 26Z" fill="#fff" /><path d="M10 20C16 8 26 6 38 10" stroke="#d86460" strokeWidth="3" fill="none" /><path d="M27 32L20 46L25 48" fill="none" stroke="#222" strokeWidth="3" /></S> },
  { art: <S><path d="M6 4H25V27L21 30H6Z" fill="#4ba7d8" /><rect x="1" y="5" width="20" height="23" rx="1" fill="#a8dcf5" stroke="#5aaede" /><circle cx="10.500" cy="16" r="7.800" fill="#f58a2a" /><path d="M8 11.500V20.500L15.500 16Z" fill="#fff" /></S> },
  { art: <S><path d="M15 0Q17 0 17.500 2L23 23H7L12.500 2Q13 0 15 0Z" fill="#f58410" /><path d="M12 5H18L19 10H10.700ZM9.500 15H20.500L22 20H8Z" fill="#e9e9ea" /><path d="M6 21H9Q15 24 21 21H24L28 29H2Z" fill="#f79a12" /></S> },
  { active: 1, art: <S><circle cx="15" cy="15" r="15" fill="#7a0d16" /><circle cx="15" cy="15" r="11.500" fill="#4a0f14" /><path d="M2 10Q8 2 20 2L8 12Z" fill="#2b0508" opacity=".6" /><path d="M10.500 7.500H14.500A7.500 7.500 0 0 1 14.500 22.500H10.500Z" fill="none" stroke="#fff" strokeWidth="3.600" strokeLinejoin="round" /></S> },
];

function Bar() {
  return (
    <Taskbar>
      <Weather>
        <svg width="42" height="32" viewBox="0 0 42 32">
          <defs><linearGradient id="cl" x1="0" y1="0" x2="0" y2="1"><stop offset="0" stopColor="#b9cdf4" /><stop offset=".7" stopColor="#c8daf8" /><stop offset="1" stopColor="#7fa3e4" /></linearGradient></defs>
          <path d="M8 31A7 7 0 0 1 7 17.500A9 9 0 0 1 24 15.500A8 8 0 0 1 25 31Z" fill="url(#cl)" />
          <rect x="11" y="1" width="30" height="20" rx="10" fill="#fafafa" opacity=".9" />
          <text x="26" y="16" fontSize="13.500" fill="#1a1a1a" textAnchor="middle" fontFamily="Noto Sans, sans-serif">0°</text>
        </svg>
      </Weather>
      <TaskIcons>
        {TASKS.map((t, i) => (
          <Task key={i} $active={t.active}>
            {t.art}
            <Mark $active={t.active} $none={t.none} />
          </Task>
        ))}
      </TaskIcons>
      <Tray>
        <TrayItem $gap={23}><svg width="14" height="9" viewBox="0 0 14 9" fill="none" stroke="#1c1c1c" strokeWidth="1.600"><path d="M1 8L7 2L13 8" /></svg></TrayItem>
        <TrayItem $gap={25}>
          <svg width="20" height="14" viewBox="0 0 20 14"><path d="M5 13.300A4 4 0 0 1 3.800 5.500A6 6 0 0 1 14.500 4.500A4.500 4.500 0 0 1 15.500 13.300Z" fill="#cfcfcf" stroke="#1c1c1c" strokeWidth="1.200" /><path d="M4 6A6 6 0 0 1 14 4.500L7 9.500Z" fill="#8c8c8c" /></svg>
        </TrayItem>
        <TrayItem $gap={23}><Fit w={27}>POL</Fit></TrayItem>
        <TrayItem $gap={10}>
          <svg width="20" height="20" viewBox="0 0 20 20" fill="none" stroke="#1c1c1c" strokeWidth="1.200"><path d="M1 6H3L5 8.300H9L7 1H9.500L13.500 8.300H17.500Q19.500 9 19.500 10T17.500 11.700H13.500L9.500 19H7L9 11.700H5L3 14H1L2 10Z" strokeLinejoin="round" /></svg>
        </TrayItem>
        <TrayItem $gap={10}>
          <svg width="20" height="18" viewBox="0 0 20 18" fill="none" stroke="#1c1c1c" strokeWidth="1.200"><path d="M1 6H4L9 2V16L4 12H1ZM11.500 6Q13.500 9 11.500 12M14 4Q17.500 9 14 14M16.500 2Q21.500 9 16.500 16" /></svg>
        </TrayItem>
        <TrayItem $gap={19.5}>
          <svg width="21" height="17" viewBox="0 0 21 17"><rect x="1" y="4.500" width="16" height="11.500" rx="2.500" fill="none" stroke="#1c1c1c" strokeWidth="1.300" /><path d="M4 7H15V13.500H4ZM17.500 8H20V12.500H17.500Z" fill="#1c1c1c" /><path d="M4 0L0 6H3L2 10L6.500 4H4Z" fill="#1c1c1c" stroke="#eee" strokeWidth=".6" /></svg>
        </TrayItem>
        <Clock>
          <Fit w={36}>16:05</Fit>
          <Fit w={72}>14.01.2025</Fit>
        </Clock>
      </Tray>
    </Taskbar>
  );
}

export default function App() {
  return (
    <Screen>
      <Global />
      <Desktop>
        <Wallpaper width="1920" height="1020">
          <defs>
            <linearGradient id="petal" x1="0" y1="0" x2="0" y2="1">
              <stop offset="0" stopColor="#2f9be4" />
              <stop offset=".5" stopColor="#1e8ae6" />
              <stop offset="1" stopColor="#1460cc" />
            </linearGradient>
            <linearGradient id="deep" x1="0" y1="0" x2="1" y2="0">
              <stop offset="0" stopColor="#1a66cc" />
              <stop offset=".1" stopColor="#1050b8" />
              <stop offset=".18" stopColor="#0a6cd0" />
              <stop offset=".3" stopColor="#0440b8" />
              <stop offset=".36" stopColor="#02268c" />
              <stop offset=".48" stopColor="#021470" />
              <stop offset=".5" stopColor="#020e5c" />
              <stop offset=".6" stopColor="#04208c" />
              <stop offset=".7" stopColor="#0638b4" />
              <stop offset=".8" stopColor="#042c9c" />
              <stop offset="1" stopColor="#04145c" />
            </linearGradient>
          </defs>
          <path d="M320 846C292 866 277 892 278 916C280 940 296 966 346 1020H420V846Z" fill="url(#petal)" stroke="#9cc8ee" />
          <path d="M336 1008L347 1020H960V1008Z" fill="url(#deep)" />
          <path d="M585 1008H608L613 1020H590ZM624 1008H642L645 1020H626ZM774 1008H796L806 1020H782ZM812 1008H826L830 1020H818ZM897 1008H920L924 1020H902Z" fill="#1c5cd0" />
          <path d="M930 1008H960V1020H939Z" fill="#020a3c" />
        </Wallpaper>
        <DesktopIcons />
        <BrowserWindow />
        <ExplorerWindow />
        <Form />
      </Desktop>
      <Bar />
    </Screen>
  );
}
